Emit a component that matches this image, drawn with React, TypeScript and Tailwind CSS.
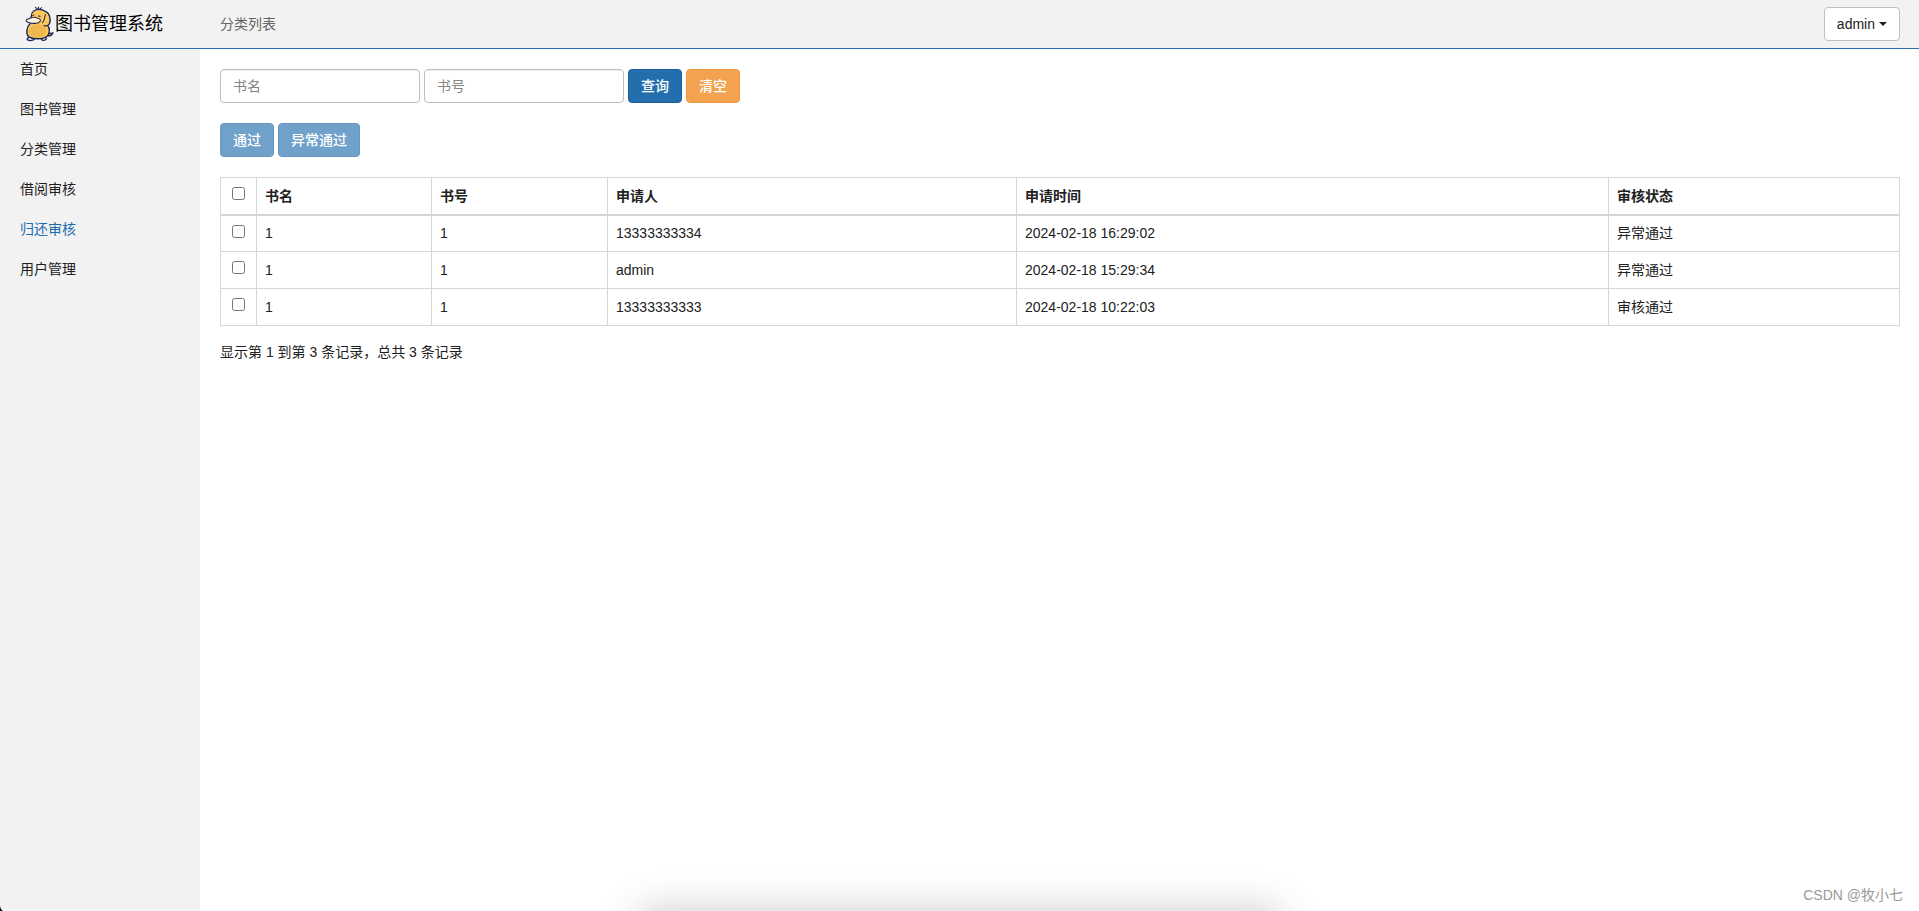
import { useState } from "react";
import clsx from "clsx";

const menus = ["首页", "图书管理", "分类管理", "借阅审核", "归还审核", "用户管理"];

const columns = [
  { label: "书名", width: "w-[175px]" },
  { label: "书号", width: "w-[176px]" },
  { label: "申请人", width: "w-[409px]" },
  { label: "申请时间", width: "w-[592px]" },
  { label: "审核状态", width: "w-[291px]" },
];

const records = [
  { id: 1, name: "1", no: "1", user: "13333333334", time: "2024-02-18 16:29:02", status: "异常通过" },
  { id: 2, name: "1", no: "1", user: "admin", time: "2024-02-18 15:29:34", status: "异常通过" },
  { id: 3, name: "1", no: "1", user: "13333333333", time: "2024-02-18 10:22:03", status: "审核通过" },
];

const btn = "h-[34px] rounded-sm border px-3 text-sm font-medium text-white";
const input =
  "h-[34px] w-[200px] rounded-sm border border-[#bfbfbf] bg-white px-3 text-sm text-[#555] shadow-[inset_0_1px_1px_rgba(0,0,0,0.08)] outline-none placeholder:text-[#858585]";
const cell = "border-r border-[#d6d6d6] px-2 py-0";
const checkbox = "mb-[6px] align-middle";

function Logo() {
  return (
    <svg viewBox="70 17 90 105" className="h-9 w-[31px]" aria-hidden="true">
      <g stroke="#1c2657" strokeWidth="4" strokeLinejoin="round" strokeLinecap="round">
        <path d="M138 103C146 105 153 102 154 95C150 98 146 98 143 95" fill="#e9a53c" />
        <path d="M88 106C80 109 77 114 81 116C87 119 97 118 101 112Z" fill="#fff" />
        <path d="M121 111C119 116 125 119 132 116C137 113 134 108 130 106Z" fill="#fff" />
        <path
          d="M91 48C91 34 101 27 113 27C122 27 127 29 132 33C139 36 145 44 146 56C147 64 144 70 139 74C146 82 145 98 137 105C127 114 95 115 84 107C74 98 77 78 88 68Z"
          fill="#fdc959"
        />
      </g>
      <ellipse cx="109" cy="90" rx="25" ry="20" fill="#eeb850" />
      <path d="M132 42C129 52 130 61 123 66M137 74C134 76 131 76 128 74" fill="none" stroke="#1c2657" strokeWidth="3" strokeLinecap="round" />
      <path
        d="M78 56C85 55 91 50 97 50C103 49 108 52 116 55C121 60 115 66 106 67C94 69 80 66 77 62C75 59 76 57 78 56Z"
        fill="#fff3d8"
        stroke="#1c2657"
        strokeWidth="3"
        strokeLinejoin="round"
      />
      <path d="M113 27L112 20M111 27L103 21M116 27L121 22M95 45L99 43M112 46L117 47" fill="none" stroke="#1c2657" strokeWidth="3" strokeLinecap="round" />
    </svg>
  );
}

export default function App() {
  const [active, setActive] = useState("归还审核");
  const [checked, setChecked] = useState<number[]>([]);
  const allChecked = checked.length === records.length;

  const toggle = (id: number) =>
    setChecked(checked.includes(id) ? checked.filter((c) => c !== id) : [...checked, id]);

  return (
    <div className="relative flex min-h-screen flex-col overflow-hidden bg-white font-['Liberation_Sans','Noto_Sans_CJK_SC',sans-serif] text-sm leading-5 text-[#212121]">
      {/* Top bar */}
      <header className="flex h-[49px] items-center border-b border-[#2572b4] bg-[#f2f2f2] pr-[19px]">
        <div className="flex w-[220px] items-center pl-6">
          <Logo />
          <h1 className="text-lg leading-6 text-black">图书管理系统</h1>
        </div>
        <span className="text-[#666]">分类列表</span>
        <button className="ml-auto flex h-[34px] items-center gap-1 rounded-sm border border-[#bfbfbf] bg-white px-3 text-sm">
          admin
          <svg viewBox="0 0 8 4" className="h-1 w-2 fill-[#212121]" aria-hidden="true">
            <path d="M0 0H8L4 4Z" />
          </svg>
        </button>
      </header>

      <div className="flex flex-1">
        {/* Side menu */}
        <nav className="w-[200px] shrink-0 bg-[#f2f2f2]">
          {menus.map((label) => (
            <a
              key={label}
              href="#"
              onClick={() => setActive(label)}
              className={clsx("block px-5 py-[10px]", active === label ? "text-[#1a6bb0]" : "text-[#212121]")}
            >
              {label}
            </a>
          ))}
        </nav>

        <main className="flex-1 py-5 pr-[19px] pl-5">
          <form className="flex gap-1" onSubmit={(e) => e.preventDefault()}>
            <input className={input} placeholder="书名" aria-label="书名" />
            <input className={input} placeholder="书号" aria-label="书号" />
            <button type="submit" className={clsx(btn, "border-[#1c5f9c] bg-[#236fae]")}>查询</button>
            <button type="reset" className={clsx(btn, "border-[#ef9a43] bg-[#f3a350]")}>清空</button>
          </form>

          <div className="mt-5 flex gap-1">
            <button className={clsx(btn, "border-[#6695bd] bg-[#6fa1ca]")}>通过</button>
            <button className={clsx(btn, "border-[#6695bd] bg-[#6fa1ca]")}>异常通过</button>
          </div>

          <table className="mt-5 w-full table-fixed border-collapse border border-[#d6d6d6]">
            <thead>
              <tr className="h-[37px] border-b-2 border-[#d6d6d6]">
                <th className="w-9 border-r border-[#d6d6d6] p-0 text-center">
                  <input
                    type="checkbox"
                    aria-label="全选"
                    className={checkbox}
                    checked={allChecked}
                    onChange={() => setChecked(allChecked ? [] : records.map((r) => r.id))}
                  />
                </th>
                {columns.map((col) => (
                  <th key={col.label} className={clsx(cell, col.width, "text-left font-bold")}>{col.label}</th>
                ))}
              </tr>
            </thead>
            <tbody>
              {records.map((r) => (
                <tr key={r.id} className="h-[37px] border-b border-[#d6d6d6]">
                  <td className="border-r border-[#d6d6d6] p-0 text-center">
                    <input
                      type="checkbox"
                      aria-label={r.time}
                      className={checkbox}
                      checked={checked.includes(r.id)}
                      onChange={() => toggle(r.id)}
                    />
                  </td>
                  <td className={cell}>{r.name}</td>
                  <td className={cell}>{r.no}</td>
                  <td className={cell}>{r.user}</td>
                  <td className={cell}>{r.time}</td>
                  <td className={cell}>{r.status}</td>
                </tr>
              ))}
            </tbody>
          </table>

          <p className="mt-4">显示第 1 到第 3 条记录，总共 3 条记录</p>
        </main>
      </div>

      {/* Shadow rising from the bottom edge */}
      <div className="absolute top-full left-1/3 h-10 w-1/3 shadow-[0_0_40px_rgba(0,0,0,0.22)]" />
      {/* Rounded window corner */}
      <svg viewBox="0 0 4 6" className="absolute bottom-0 left-0 h-[6px] w-1" aria-hidden="true">
        <path d="M0 0Q0 4 3 6H0Z" fill="#000" />
      </svg>
      <span className="absolute right-4 bottom-1 text-sm leading-6 text-[#999]">CSDN @牧小七</span>
    </div>
  );
}
